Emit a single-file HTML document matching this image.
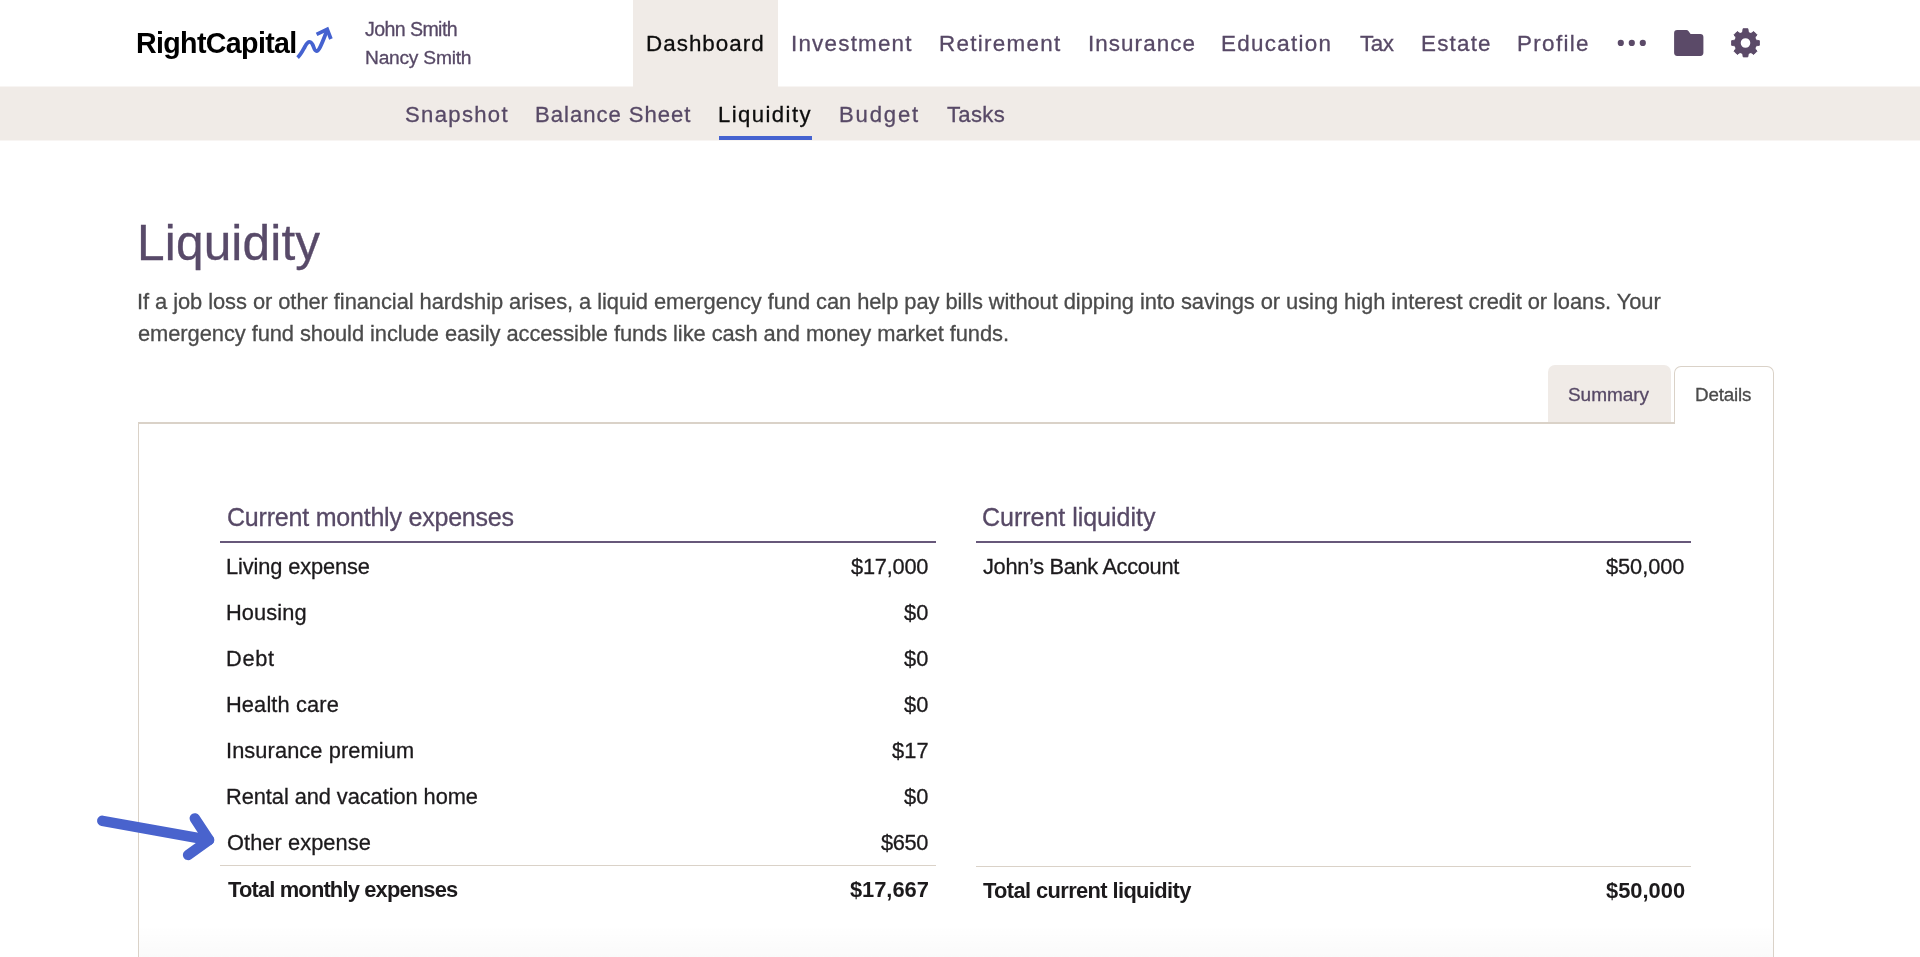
<!DOCTYPE html>
<html><head><meta charset="utf-8"><title>RightCapital - Liquidity</title>
<style>
html,body{margin:0;padding:0;}
body{width:1920px;height:957px;overflow:hidden;position:relative;background:#fff;font-family:"Liberation Sans",sans-serif;}
.t{position:absolute;white-space:pre;will-change:transform;font-family:"Liberation Sans",sans-serif;}
.b{position:absolute;}
</style></head><body>
<div class="b" style="left:0px;top:0px;width:1920px;height:86px;background:#fff"></div>
<div class="b" style="left:633px;top:0px;width:145px;height:86px;background:#f0ebe7"></div>
<div class="b" style="left:0px;top:86px;width:1920px;height:55px;background:#f0ebe7"></div>
<div class="b" style="left:0px;top:86px;width:633px;height:1px;background:#f8f5f3"></div>
<div class="b" style="left:778px;top:86px;width:1142px;height:1px;background:#f8f5f3"></div>
<div class="b" style="left:0px;top:140px;width:1920px;height:1px;background:#f8f5f3"></div>
<div class="b" style="left:719px;top:136px;width:93px;height:4px;background:#4562d0"></div>
<div class="b" style="left:139px;top:925px;width:1634px;height:32px;background:linear-gradient(to bottom,rgba(0,0,0,0),rgba(0,0,0,0.018))"></div>
<div class="b" style="left:1548px;top:365px;width:123px;height:58px;background:#f0ebe7;border-radius:7px 7px 0 0"></div>
<div class="b" style="left:1674px;top:366px;width:98px;height:57px;background:#fff;border:1px solid #dad2c8;border-bottom:none;border-radius:7px 7px 0 0"></div>
<div class="b" style="left:138px;top:422px;width:1536px;height:2px;background:#dad2c8"></div>
<div class="b" style="left:138px;top:422px;width:1px;height:535px;background:#dad2c8"></div>
<div class="b" style="left:1773px;top:400px;width:1px;height:557px;background:#dad2c8"></div>
<div class="b" style="left:1674px;top:400px;width:1px;height:24px;background:#dad2c8"></div>
<div class="b" style="left:220px;top:541px;width:716px;height:2px;background:#67587a"></div>
<div class="b" style="left:976px;top:541px;width:715px;height:2px;background:#67587a"></div>
<div class="b" style="left:220px;top:865px;width:716px;height:1px;background:#dad2c8"></div>
<div class="b" style="left:976px;top:866px;width:715px;height:1px;background:#dad2c8"></div>
<div class="t" style="left:135.9px;top:21.8px;font-size:28.6px;line-height:42px;font-weight:700;letter-spacing:-0.645px;color:#000">RightCapital</div>
<div class="t" style="left:365.3px;top:14.7px;font-size:19.6px;line-height:29px;font-weight:400;letter-spacing:-0.6px;color:#574966;-webkit-text-stroke:0.3px #574966">John Smith</div>
<div class="t" style="left:365.3px;top:43.9px;font-size:19.2px;line-height:28px;font-weight:400;letter-spacing:-0.23px;color:#574966;-webkit-text-stroke:0.3px #574966">Nancy Smith</div>
<div class="t" style="left:646.0px;top:27.0px;font-size:22.4px;line-height:33px;font-weight:400;letter-spacing:1.025px;color:#0d0d0d;-webkit-text-stroke:0.3px #0d0d0d">Dashboard</div>
<div class="t" style="left:791.0px;top:27.0px;font-size:22.4px;line-height:33px;font-weight:400;letter-spacing:1.222px;color:#574966;-webkit-text-stroke:0.3px #574966">Investment</div>
<div class="t" style="left:939.0px;top:27.0px;font-size:22.4px;line-height:33px;font-weight:400;letter-spacing:1.3px;color:#574966;-webkit-text-stroke:0.3px #574966">Retirement</div>
<div class="t" style="left:1087.7px;top:27.0px;font-size:22.4px;line-height:33px;font-weight:400;letter-spacing:1.075px;color:#574966;-webkit-text-stroke:0.3px #574966">Insurance</div>
<div class="t" style="left:1221.4px;top:27.0px;font-size:22.4px;line-height:33px;font-weight:400;letter-spacing:1.287px;color:#574966;-webkit-text-stroke:0.3px #574966">Education</div>
<div class="t" style="left:1359.7px;top:27.0px;font-size:22.4px;line-height:33px;font-weight:400;letter-spacing:-0.4px;color:#574966;-webkit-text-stroke:0.3px #574966">Tax</div>
<div class="t" style="left:1420.7px;top:27.0px;font-size:22.4px;line-height:33px;font-weight:400;letter-spacing:1.21px;color:#574966;-webkit-text-stroke:0.3px #574966">Estate</div>
<div class="t" style="left:1517.2px;top:27.0px;font-size:22.4px;line-height:33px;font-weight:400;letter-spacing:1.35px;color:#574966;-webkit-text-stroke:0.3px #574966">Profile</div>
<div class="t" style="left:405.25px;top:97.5px;font-size:22.1px;line-height:33px;font-weight:400;letter-spacing:1.321px;color:#574966;-webkit-text-stroke:0.3px #574966">Snapshot</div>
<div class="t" style="left:535.2px;top:97.5px;font-size:22.1px;line-height:33px;font-weight:400;letter-spacing:0.983px;color:#574966;-webkit-text-stroke:0.3px #574966">Balance Sheet</div>
<div class="t" style="left:718.3px;top:97.5px;font-size:22.1px;line-height:33px;font-weight:400;letter-spacing:1.438px;color:#0d0d0d;-webkit-text-stroke:0.3px #0d0d0d">Liquidity</div>
<div class="t" style="left:838.8px;top:97.5px;font-size:22.1px;line-height:33px;font-weight:400;letter-spacing:1.84px;color:#574966;-webkit-text-stroke:0.3px #574966">Budget</div>
<div class="t" style="left:946.7px;top:97.5px;font-size:22.1px;line-height:33px;font-weight:400;letter-spacing:0.325px;color:#574966;-webkit-text-stroke:0.3px #574966">Tasks</div>
<div class="t" style="left:137.0px;top:205.8px;font-size:49.6px;line-height:74px;font-weight:400;letter-spacing:0.15px;color:#584a69;-webkit-text-stroke:0.3px #584a69">Liquidity</div>
<div class="t" style="left:137.2px;top:285.6px;font-size:21.9px;line-height:32px;font-weight:400;letter-spacing:-0.065px;color:#4b4b4b;-webkit-text-stroke:0.3px #4b4b4b">If a job loss or other financial hardship arises, a liquid emergency fund can help pay bills without dipping into savings or using high interest credit or loans. Your</div>
<div class="t" style="left:138.2px;top:317.9px;font-size:21.9px;line-height:32px;font-weight:400;letter-spacing:-0.074px;color:#4b4b4b;-webkit-text-stroke:0.3px #4b4b4b">emergency fund should include easily accessible funds like cash and money market funds.</div>
<div class="t" style="left:1568.3px;top:381.3px;font-size:19.0px;line-height:28px;font-weight:400;letter-spacing:-0.05px;color:#574966;-webkit-text-stroke:0.3px #574966">Summary</div>
<div class="t" style="left:1695.4px;top:381.2px;font-size:18.8px;line-height:28px;font-weight:400;letter-spacing:-0.15px;color:#4b4b4b;-webkit-text-stroke:0.3px #4b4b4b">Details</div>
<div class="t" style="left:226.8px;top:498.6px;font-size:25.0px;line-height:37px;font-weight:400;letter-spacing:-0.209px;color:#574966;-webkit-text-stroke:0.3px #574966">Current monthly expenses</div>
<div class="t" style="left:982.3px;top:499.0px;font-size:25.0px;line-height:37px;font-weight:400;letter-spacing:-0.019px;color:#574966;-webkit-text-stroke:0.3px #574966">Current liquidity</div>
<div class="t" style="left:226.2px;top:550.8px;font-size:21.8px;line-height:32px;font-weight:400;letter-spacing:-0.112px;color:#1c1a1c;-webkit-text-stroke:0.3px #1c1a1c">Living expense</div>
<div class="t" style="left:850.9px;top:550.8px;font-size:21.8px;line-height:32px;font-weight:400;letter-spacing:-0.225px;color:#1c1a1c;-webkit-text-stroke:0.3px #1c1a1c">$17,000</div>
<div class="t" style="left:226.2px;top:596.8px;font-size:21.8px;line-height:32px;font-weight:400;letter-spacing:0.117px;color:#1c1a1c;-webkit-text-stroke:0.3px #1c1a1c">Housing</div>
<div class="t" style="left:903.9px;top:596.8px;font-size:21.8px;line-height:32px;font-weight:400;letter-spacing:0.1px;color:#1c1a1c;-webkit-text-stroke:0.3px #1c1a1c">$0</div>
<div class="t" style="left:226.2px;top:642.8px;font-size:21.8px;line-height:32px;font-weight:400;letter-spacing:0.7px;color:#1c1a1c;-webkit-text-stroke:0.3px #1c1a1c">Debt</div>
<div class="t" style="left:903.9px;top:642.8px;font-size:21.8px;line-height:32px;font-weight:400;letter-spacing:0.1px;color:#1c1a1c;-webkit-text-stroke:0.3px #1c1a1c">$0</div>
<div class="t" style="left:226.2px;top:688.8px;font-size:21.8px;line-height:32px;font-weight:400;letter-spacing:0.13px;color:#1c1a1c;-webkit-text-stroke:0.3px #1c1a1c">Health care</div>
<div class="t" style="left:903.9px;top:688.8px;font-size:21.8px;line-height:32px;font-weight:400;letter-spacing:0.1px;color:#1c1a1c;-webkit-text-stroke:0.3px #1c1a1c">$0</div>
<div class="t" style="left:226.2px;top:734.8px;font-size:21.8px;line-height:32px;font-weight:400;letter-spacing:0.094px;color:#1c1a1c;-webkit-text-stroke:0.3px #1c1a1c">Insurance premium</div>
<div class="t" style="left:891.9px;top:734.8px;font-size:21.8px;line-height:32px;font-weight:400;letter-spacing:0.15px;color:#1c1a1c;-webkit-text-stroke:0.3px #1c1a1c">$17</div>
<div class="t" style="left:226.2px;top:780.8px;font-size:21.8px;line-height:32px;font-weight:400;letter-spacing:-0.057px;color:#1c1a1c;-webkit-text-stroke:0.3px #1c1a1c">Rental and vacation home</div>
<div class="t" style="left:903.9px;top:780.8px;font-size:21.8px;line-height:32px;font-weight:400;letter-spacing:0.1px;color:#1c1a1c;-webkit-text-stroke:0.3px #1c1a1c">$0</div>
<div class="t" style="left:227.2px;top:826.8px;font-size:21.8px;line-height:32px;font-weight:400;letter-spacing:0.067px;color:#1c1a1c;-webkit-text-stroke:0.3px #1c1a1c">Other expense</div>
<div class="t" style="left:880.9px;top:826.8px;font-size:21.8px;line-height:32px;font-weight:400;letter-spacing:-0.367px;color:#1c1a1c;-webkit-text-stroke:0.3px #1c1a1c">$650</div>
<div class="t" style="left:227.9px;top:873.7px;font-size:21.9px;line-height:32px;font-weight:700;letter-spacing:-0.838px;color:#1c1a1c">Total monthly expenses</div>
<div class="t" style="left:850.0px;top:873.7px;font-size:21.9px;line-height:32px;font-weight:700;letter-spacing:-0.05px;color:#1c1a1c">$17,667</div>
<div class="t" style="left:983.3px;top:551.0px;font-size:21.8px;line-height:32px;font-weight:400;letter-spacing:-0.317px;color:#1c1a1c;-webkit-text-stroke:0.3px #1c1a1c">John’s Bank Account</div>
<div class="t" style="left:1605.6px;top:551.0px;font-size:21.8px;line-height:32px;font-weight:400;letter-spacing:-0.067px;color:#1c1a1c;-webkit-text-stroke:0.3px #1c1a1c">$50,000</div>
<div class="t" style="left:983.2px;top:875.0px;font-size:21.9px;line-height:32px;font-weight:700;letter-spacing:-0.627px;color:#1c1a1c">Total current liquidity</div>
<div class="t" style="left:1606.0px;top:875.0px;font-size:21.9px;line-height:32px;font-weight:700;letter-spacing:0.0px;color:#1c1a1c">$50,000</div>
<svg class="b" style="left:0;top:0" width="1920" height="957" viewBox="0 0 1920 957">
<path d="M297.6,57.6 C301,54.5 303,50 305,46.5 C306.5,43.5 307.8,41.8 309.6,41.8 C311.6,41.8 312.6,44 313.6,47 C314.6,50 315.3,51 316.6,51 C318.6,51 320.5,47.5 327.2,30" fill="none" stroke="#4562d0" stroke-width="3.8" stroke-linecap="butt" stroke-linejoin="round"/>
<path d="M316.6,34.4 L327.2,29.4 L330.9,39" fill="none" stroke="#4562d0" stroke-width="3.8" stroke-linecap="butt" stroke-linejoin="miter"/>
<g fill="#5b4a68"><circle cx="1620.8" cy="42.9" r="3.1"/><circle cx="1631.8" cy="42.9" r="3.1"/><circle cx="1642.8" cy="42.9" r="3.1"/></g>
<path d="M1677.2,30.1 L1686.4,30.1 Q1687.6,30.1 1688.4,31 L1690.6,34 L1700.3,34 Q1703.4,34 1703.4,37.1 L1703.4,52.8 Q1703.4,55.9 1700.3,55.9 L1677.2,55.9 Q1674.1,55.9 1674.1,52.8 L1674.1,33.2 Q1674.1,30.1 1677.2,30.1 Z" fill="#5b4a68"/>
<g transform="translate(1745.5,43)" fill="#5b4a68" stroke="#5b4a68" stroke-width="0.9" stroke-linejoin="round">
<path fill-rule="evenodd" stroke="none" d="M0,-11.3 A11.3,11.3 0 1,1 0,11.3 A11.3,11.3 0 1,1 0,-11.3 Z M0,-4.8 A4.8,4.8 0 1,0 0,4.8 A4.8,4.8 0 1,0 0,-4.8 Z"/>
<path d="M-3.2,-9 L-2.4,-14.3 L2.4,-14.3 L3.2,-9 Z" transform="rotate(0)"/><path d="M-3.1,-9 L-2.3,-13.9 L2.3,-13.9 L3.1,-9 Z" transform="rotate(45)"/><path d="M-3.1,-9 L-2.3,-13.9 L2.3,-13.9 L3.1,-9 Z" transform="rotate(90)"/><path d="M-3.1,-9 L-2.3,-13.9 L2.3,-13.9 L3.1,-9 Z" transform="rotate(135)"/><path d="M-3.1,-9 L-2.3,-13.9 L2.3,-13.9 L3.1,-9 Z" transform="rotate(180)"/><path d="M-3.1,-9 L-2.3,-13.9 L2.3,-13.9 L3.1,-9 Z" transform="rotate(225)"/><path d="M-3.1,-9 L-2.3,-13.9 L2.3,-13.9 L3.1,-9 Z" transform="rotate(270)"/><path d="M-3.1,-9 L-2.3,-13.9 L2.3,-13.9 L3.1,-9 Z" transform="rotate(315)"/>
</g>
<g fill="none" stroke="#4963cd" stroke-width="10.5" stroke-linecap="round" stroke-linejoin="round">
<path d="M102.3,820.8 L209,840"/>
<path d="M194.8,818.4 L209,840 L188.1,854.9"/>
</g>
</svg>
</body></html>
